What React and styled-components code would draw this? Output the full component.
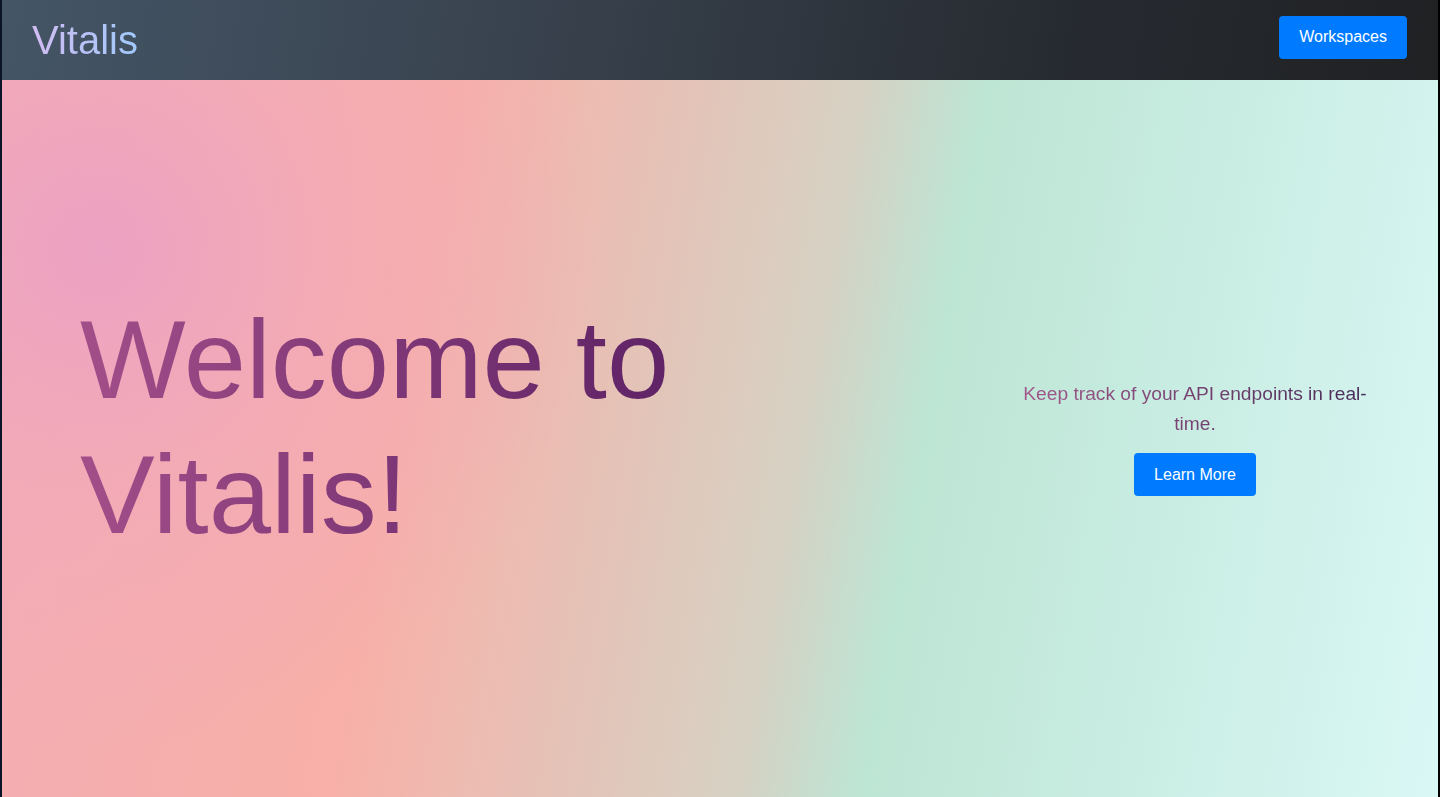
import React from 'react';
import styled, { createGlobalStyle } from 'styled-components';

const GlobalStyle = createGlobalStyle`
    html, body {
        margin: 0;
        padding: 0;
        height: 100%;
    }
    body {
        font-family: "Liberation Sans", Arial, sans-serif;
        background: #000;
    }
    #root {
        height: 100%;
    }
`;

function App() {
    return (
        <>
            <GlobalStyle />
            <Page>
                <NavBar>
                    <Brand>Vitalis</Brand>
                    <NavButton>Workspaces</NavButton>
                </NavBar>
                <Hero>
                    <Title>Welcome to<br />Vitalis!</Title>
                    <Aside>
                        <Tagline>Keep track of your API endpoints in real-time.</Tagline>
                        <PrimaryButton>Learn More</PrimaryButton>
                    </Aside>
                </Hero>
            </Page>
        </>
    );
}

const Page = styled.div`
    height: 100%;
    display: flex;
    flex-direction: column;
    border-left: 2px solid #0c1528;
    border-right: 2px solid #000;
    box-sizing: border-box;
`;

const NavBar = styled.header`
    height: 80px;
    flex: 0 0 80px;
    display: flex;
    align-items: center;
    justify-content: space-between;
    padding: 0 31px 0 30px;
    box-sizing: border-box;
    background: linear-gradient(100deg, #445566 0%, #39434f 35%, #262a30 75%, #202123 100%);
`;

const Brand = styled.div`
    font-size: 40px;
    line-height: 1;
    margin-top: 1px;
    background: linear-gradient(90deg, #d2bcf2, #9fc9fb);
    -webkit-background-clip: text;
    background-clip: text;
    color: transparent;
    padding-bottom: 2px;
`;

const PrimaryButton = styled.button`
    height: 43px;
    padding: 0 20px;
    border: none;
    border-radius: 4px;
    background: #007bff;
    color: #fff;
    font-family: "Liberation Sans", Arial, sans-serif;
    font-size: 16px;
    cursor: pointer;
`;

const NavButton = styled(PrimaryButton)`
    margin-bottom: 6px;
`;

const Hero = styled.main`
    flex: 1;
    display: flex;
    align-items: center;
    justify-content: space-between;
    padding: 0 58px 0 78px;
    background:
        radial-gradient(circle at 100px 170px, rgba(234, 158, 200, 0.75) 0, rgba(240, 166, 190, 0.5) 220px, rgba(242, 170, 180, 0) 500px),
        linear-gradient(100deg, #f3adb4 0%, #f8b0a8 29%, #d6d1c3 55%, #bde5d4 63%, #c9ede3 80%, #daf8f5 100%);
`;

const Title = styled.h1`
    margin: 0 0 24px;
    font-size: 112px;
    font-weight: 400;
    line-height: 135px;
    background: linear-gradient(90deg, #a24e89, #5f2366);
    -webkit-background-clip: text;
    background-clip: text;
    color: transparent;
`;

const Aside = styled.div`
    width: 370px;
    display: flex;
    flex-direction: column;
    align-items: center;
    text-align: center;
    margin-bottom: 2px;
`;

const Tagline = styled.p`
    margin: 0 0 14px;
    font-size: 19.2px;
    line-height: 30px;
    background: linear-gradient(90deg, #a65a8c, #452955);
    -webkit-background-clip: text;
    background-clip: text;
    color: transparent;
`;

export default App;
